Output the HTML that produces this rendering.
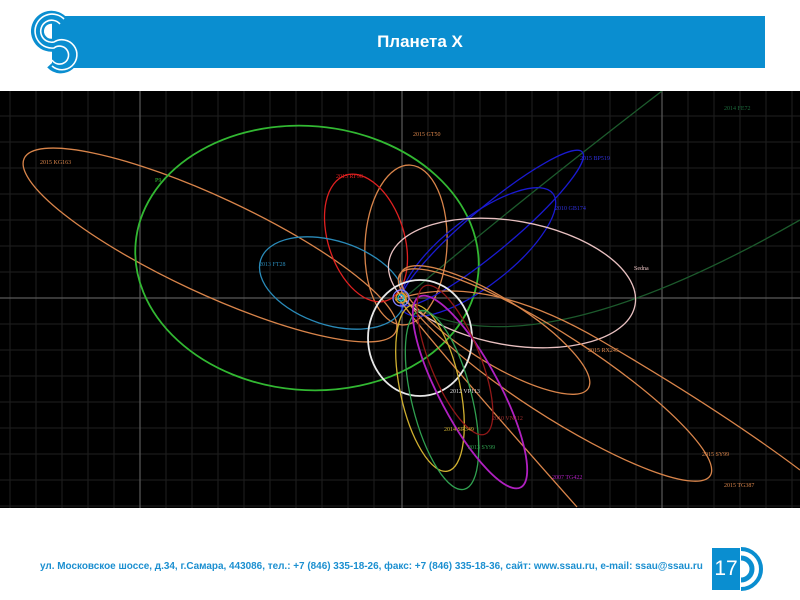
<!DOCTYPE html>
<html><head><meta charset="utf-8"><style>
body{margin:0;width:800px;height:600px;background:#fff;position:relative;overflow:hidden;font-family:"Liberation Sans",sans-serif}
.bar{position:absolute;left:52px;top:16px;width:713px;height:52px;background:#0a8ed0;border-top-left-radius:8px}
.title{position:absolute;left:0;width:840px;top:32px;text-align:center;color:#fff;font-weight:bold;font-size:17px}
.foot{position:absolute;left:40px;top:561px;color:#1b8fd0;font-weight:bold;font-size:9.95px;white-space:nowrap}
.num{position:absolute;left:712px;top:548px;width:28px;height:42px;background:#0a8ed0;color:#fff;font-size:21px;line-height:42px;text-align:center}
</style></head><body>
<div class="bar"></div>
<svg style="position:absolute;left:0;top:0" width="100" height="80">
<g fill="none">
<path d="M62 22 A14 14 0 1 0 54 45 A12 12 0 1 1 52 63" stroke="#0a8ed0" stroke-width="13"/>
<path d="M60 24 A11 11 0 1 0 54 42 A15 15 0 1 1 52 66" stroke="#fff" stroke-width="1.6"/>
<path d="M64 19 A17 17 0 1 0 54 48 A9 9 0 1 1 52 60" stroke="#fff" stroke-width="1.6"/>
</g></svg>
<div class="title">Планета X</div>
<svg style="position:absolute;left:0;top:91px" width="800" height="417" viewBox="0 91 800 417">
<rect x="0" y="91" width="800" height="417" fill="#000"/>
<g stroke="#1f1f1f" stroke-width="1">
<path d="M10 91V508M36 91V508M62 91V508M88 91V508M114 91V508M166 91V508M192 91V508M218 91V508M244 91V508M270 91V508M296 91V508M322 91V508M348 91V508M374 91V508M428 91V508M454 91V508M480 91V508M506 91V508M532 91V508M558 91V508M584 91V508M610 91V508M636 91V508M688 91V508M714 91V508M740 91V508M766 91V508M792 91V508"/>
<path d="M0 116H800M0 142H800M0 168H800M0 194H800M0 220H800M0 246H800M0 272H800M0 324H800M0 350H800M0 376H800M0 402H800M0 428H800M0 454H800M0 480H800M0 506H800"/>
</g>
<g stroke="#5a5a5a" stroke-width="1.2"><path d="M140 91V508M402 91V508M662 91V508M0 298H800"/></g>
<g fill="none" stroke-width="1.3">
<path d="M402 300 Q520 200 662 91" stroke="#1c5a2c"/>
<path d="M402 300 Q520 380 800 220" stroke="#1c5a2c"/>
<ellipse cx="210" cy="245" rx="205" ry="48" transform="rotate(25 210 245)" stroke="#d8844a"/>
<ellipse cx="307" cy="258" rx="172" ry="132" transform="rotate(5 307 258)" stroke="#32b832" stroke-width="1.8"/>
<ellipse cx="406" cy="245" rx="41" ry="80" transform="rotate(3 406 245)" stroke="#d8844a"/>
<ellipse cx="366" cy="238" rx="38" ry="66" transform="rotate(-18 366 238)" stroke="#e02020"/>
<ellipse cx="332" cy="283" rx="75" ry="42" transform="rotate(18 332 283)" stroke="#2a8ab8"/>
<ellipse cx="492" cy="228" rx="118" ry="22" transform="rotate(-40 492 228)" stroke="#1a1ad0"/>
<ellipse cx="478" cy="252" rx="95" ry="34" transform="rotate(-38 478 252)" stroke="#1a1ad0"/>
<ellipse cx="512" cy="283" rx="125" ry="62" transform="rotate(10 512 283)" stroke="#e8c0c0"/>
<ellipse cx="495" cy="330" rx="110" ry="32" transform="rotate(32 495 330)" stroke="#d8844a"/>
<ellipse cx="555" cy="375" rx="185" ry="40" transform="rotate(33 555 375)" stroke="#d8844a"/>
<path d="M395 300 Q480 270 600 340 Q720 410 800 470" stroke="#d8844a"/>
<path d="M400 300 Q420 330 577 507" stroke="#d8844a"/>
<ellipse cx="420" cy="338" rx="52" ry="58" stroke="#e8e8e8" stroke-width="1.8"/>
<ellipse cx="430" cy="388" rx="30" ry="85" transform="rotate(-12 430 388)" stroke="#d0b030"/>
<ellipse cx="442" cy="400" rx="30" ry="92" transform="rotate(-14 442 400)" stroke="#30a050"/>
<ellipse cx="470" cy="392" rx="30" ry="108" transform="rotate(-28 470 392)" stroke="#b020c0" stroke-width="1.8"/>
<ellipse cx="455" cy="360" rx="25" ry="80" transform="rotate(-22 455 360)" stroke="#901818"/>
<circle cx="401" cy="298" r="8" stroke="#8080ff"/><circle cx="401" cy="298" r="5" stroke="#e0a020"/><circle cx="401" cy="298" r="3" stroke="#20c0c0"/>
</g>
<g font-family="Liberation Serif,serif" font-size="6">
<text x="40" y="164" fill="#d8844a">2015 KG163</text>
<text x="413" y="136" fill="#d8844a">2015 GT50</text>
<text x="336" y="178" fill="#e02020">2013 RF98</text>
<text x="259" y="266" fill="#2a8ab8">2013 FT28</text>
<text x="580" y="160" fill="#3030e0">2015 BP519</text>
<text x="555" y="210" fill="#3030e0">2010 GB174</text>
<text x="634" y="270" fill="#e8c0c0">Sedna</text>
<text x="588" y="352" fill="#d8844a">2015 RX245</text>
<text x="450" y="393" fill="#ddd">2012 VP113</text>
<text x="492" y="420" fill="#a03030">2010 VN112</text>
<text x="444" y="431" fill="#d0b030">2014 SR349</text>
<text x="468" y="449" fill="#30a050">2013 SY99</text>
<text x="552" y="479" fill="#b020c0">2007 TG422</text>
<text x="702" y="456" fill="#d8844a">2015 SY99</text>
<text x="724" y="487" fill="#d8844a">2015 TG387</text>
<text x="724" y="110" fill="#1c6a3c">2014 FE72</text>
<text x="155" y="182" fill="#32b832">P9</text>
</g>
</svg>
<div class="foot">ул. Московское шоссе, д.34, г.Самара, 443086, тел.: +7 (846) 335-18-26, факс: +7 (846) 335-18-36, сайт: www.ssau.ru, e-mail: ssau@ssau.ru</div>
<div class="num">17</div>
<svg style="position:absolute;left:738px;top:546px" width="30" height="46"><g fill="none" stroke="#0a8ed0"><path d="M3 12 A11 11 0 0 1 3 34" stroke-width="5"/><path d="M3 3 A20 20 0 0 1 3 43" stroke-width="4"/></g></svg>
</body></html>
